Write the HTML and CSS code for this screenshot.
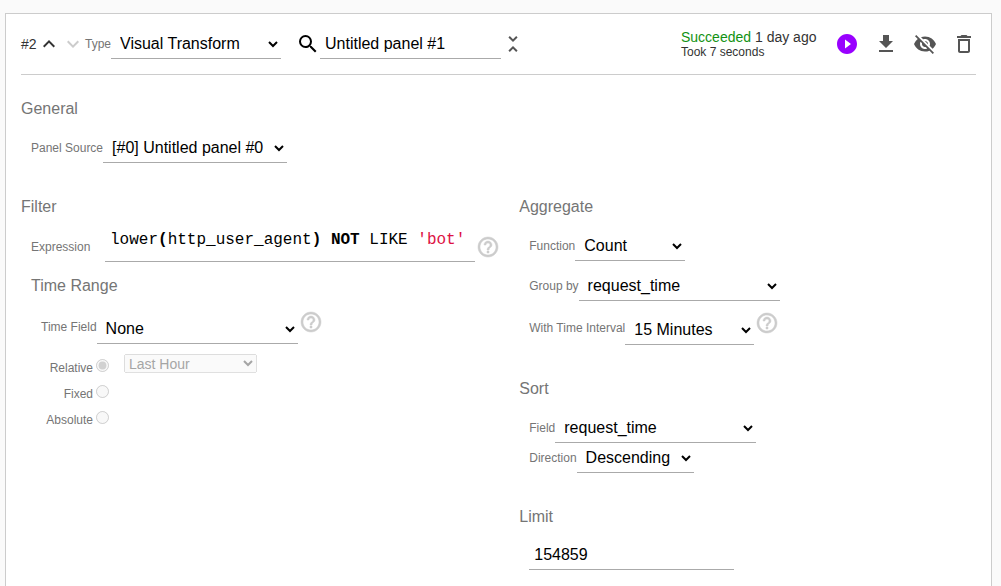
FILE: index.html
```html
<!DOCTYPE html>
<html lang="en">
<head>
<meta charset="utf-8">
<meta name="viewport" content="width=device-width, initial-scale=1">
<title>Untitled panel #1</title>
<link rel="stylesheet" href="styles.css">
</head>
<body>
<main class="panel">
  <header class="panel-header">
    <span class="panel-number">#2</span>
    <button class="icon-button move-up" type="button" aria-label="Move up"><svg class="icon" viewBox="0 0 24 24"><path d="M7.41 15.41 12 10.83l4.59 4.58L18 14l-6-6-6 6z"/></svg></button>
    <button class="icon-button move-down" type="button" aria-label="Move down" disabled><svg class="icon" viewBox="0 0 24 24"><path d="M7.41 8.59 12 13.17l4.59-4.58L18 10l-6 6-6-6z"/></svg></button>
    <label class="label" for="type">Type</label>
    <select class="select select-type" id="type"><option>Visual Transform</option></select>
    <label class="search-label" for="name" aria-label="Panel name"><svg class="icon" viewBox="0 0 24 24"><path d="M15.5 14h-.79l-.28-.27A6.471 6.471 0 0 0 16 9.5 6.5 6.5 0 1 0 9.5 16c1.61 0 3.09-.59 4.23-1.57l.27.28v.79l5 4.99L20.49 19l-4.99-5zm-6 0C7.01 14 5 11.99 5 9.5S7.01 5 9.5 5 14 7.01 14 9.5 11.99 14 9.5 14z"/></svg></label>
    <input class="text-input name-input" id="name" type="text" value="Untitled panel #1">
    <button class="icon-button" type="button" aria-label="Collapse panel"><svg class="icon" viewBox="0 0 24 24"><path d="M7.41 18.59 8.83 20 12 16.83 15.17 20l1.41-1.41L12 14l-4.59 4.59zm9.18-13.18L15.17 4 12 7.17 8.83 4 7.41 5.41 12 10l4.59-4.59z"/></svg></button>
    <div class="actions">
      <div class="status">
        <div class="status-line"><span class="success">Succeeded</span> 1 day ago</div>
        <div class="status-time">Took 7 seconds</div>
      </div>
      <button class="icon-button run" type="button" aria-label="Run"><svg class="icon" viewBox="0 0 24 24"><path d="M12 2C6.48 2 2 6.48 2 12s4.48 10 10 10 10-4.48 10-10S17.52 2 12 2zm-2 14.5v-9l6 4.5-6 4.5z"/></svg></button>
      <button class="icon-button" type="button" aria-label="Download"><svg class="icon" viewBox="0 0 24 24"><path d="M19 9h-4V3H9v6H5l7 7 7-7zM5 18v2h14v-2H5z"/></svg></button>
      <button class="icon-button" type="button" aria-label="Hide"><svg class="icon" viewBox="0 0 24 24"><path d="M12 7c2.76 0 5 2.24 5 5 0 .65-.13 1.26-.36 1.83l2.92 2.92c1.51-1.26 2.7-2.89 3.43-4.75-1.73-4.39-6-7.5-11-7.5-1.4 0-2.74.25-3.98.7l2.16 2.16C10.74 7.13 11.35 7 12 7zM2 4.27l2.28 2.28.46.46A11.804 11.804 0 0 0 1 12c1.73 4.39 6 7.5 11 7.5 1.55 0 3.03-.3 4.38-.84l.42.42L19.73 22 21 20.73 3.27 3 2 4.27zM7.53 9.8l1.55 1.55c-.05.21-.08.43-.08.65 0 1.66 1.34 3 3 3 .22 0 .44-.03.65-.08l1.55 1.55c-.67.33-1.41.53-2.2.53-2.76 0-5-2.24-5-5 0-.79.2-1.53.53-2.2zm4.31-.78 3.15 3.15.02-.16c0-1.66-1.34-3-3-3l-.17.01z"/></svg></button>
      <button class="icon-button" type="button" aria-label="Delete"><svg class="icon" viewBox="0 0 24 24"><path d="M6 19c0 1.1.9 2 2 2h8c1.1 0 2-.9 2-2V7H6v12zM8 9h8v10H8V9zm7.5-5-1-1h-5l-1 1H5v2h14V4h-3.5z"/></svg></button>
    </div>
  </header>

  <section class="section">
    <h2 class="heading">General</h2>
    <div class="fields">
      <div class="row">
        <label class="label" for="source">Panel Source</label>
        <select class="select" id="source"><option>[#0] Untitled panel #0</option></select>
      </div>
    </div>
  </section>

  <div class="columns">
    <section class="section">
      <h2 class="heading">Filter</h2>
      <div class="fields">
        <div class="row expression-row">
          <span class="label expression-label" id="expression-label">Expression</span>
          <div class="expression" role="textbox" contenteditable="true" spellcheck="false" aria-labelledby="expression-label">lower<b>(</b>http_user_agent<b>)</b> <b>NOT</b> LIKE <span class="string">'bot'</span></div>
          <button class="icon-button help" type="button" aria-label="Expression help"><svg class="icon" viewBox="0 0 24 24"><path d="M11 18h2v-2h-2v2zm1-16C6.48 2 2 6.48 2 12s4.48 10 10 10 10-4.48 10-10S17.52 2 12 2zm0 18c-4.41 0-8-3.59-8-8s3.59-8 8-8 8 3.59 8 8-3.59 8-8 8zm0-14c-2.21 0-4 1.79-4 4h2c0-1.1.9-2 2-2s2 .9 2 2c0 2-3 1.75-3 5h2c0-2.25 3-2.5 3-5 0-2.21-1.79-4-4-4z"/></svg></button>
        </div>
        <h3 class="heading subheading">Time Range</h3>
        <div class="fields">
          <div class="row help-row">
            <label class="label" for="time-field">Time Field</label>
            <select class="select select-wide" id="time-field"><option>None</option></select>
            <button class="icon-button help" type="button" aria-label="Time field help"><svg class="icon" viewBox="0 0 24 24"><path d="M11 18h2v-2h-2v2zm1-16C6.48 2 2 6.48 2 12s4.48 10 10 10 10-4.48 10-10S17.52 2 12 2zm0 18c-4.41 0-8-3.59-8-8s3.59-8 8-8 8 3.59 8 8-3.59 8-8 8zm0-14c-2.21 0-4 1.79-4 4h2c0-1.1.9-2 2-2s2 .9 2 2c0 2-3 1.75-3 5h2c0-2.25 3-2.5 3-5 0-2.21-1.79-4-4-4z"/></svg></button>
          </div>
          <div class="ranges">
            <div class="range">
              <label class="range-label" for="relative">Relative</label>
              <input class="radio" type="radio" name="range" id="relative" checked disabled>
              <select class="range-select" aria-label="Relative range" disabled><option>Last Hour</option></select>
            </div>
            <div class="range">
              <label class="range-label" for="fixed">Fixed</label>
              <input class="radio" type="radio" name="range" id="fixed" disabled>
            </div>
            <div class="range">
              <label class="range-label" for="absolute">Absolute</label>
              <input class="radio" type="radio" name="range" id="absolute" disabled>
            </div>
          </div>
        </div>
      </div>
    </section>

    <div>
      <section class="section">
        <h2 class="heading">Aggregate</h2>
        <div class="fields">
          <div class="row">
            <label class="label" for="function">Function</label>
            <select class="select select-function" id="function"><option>Count</option></select>
          </div>
          <div class="row group-row">
            <label class="label" for="group">Group by</label>
            <select class="select select-wide" id="group"><option>request_time</option></select>
          </div>
          <div class="row help-row interval-row">
            <label class="label" for="interval">With Time Interval</label>
            <select class="select select-interval" id="interval"><option>15 Minutes</option></select>
            <button class="icon-button help" type="button" aria-label="Time interval help"><svg class="icon" viewBox="0 0 24 24"><path d="M11 18h2v-2h-2v2zm1-16C6.48 2 2 6.48 2 12s4.48 10 10 10 10-4.48 10-10S17.52 2 12 2zm0 18c-4.41 0-8-3.59-8-8s3.59-8 8-8 8 3.59 8 8-3.59 8-8 8zm0-14c-2.21 0-4 1.79-4 4h2c0-1.1.9-2 2-2s2 .9 2 2c0 2-3 1.75-3 5h2c0-2.25 3-2.5 3-5 0-2.21-1.79-4-4-4z"/></svg></button>
          </div>
        </div>
      </section>
      <section class="section">
        <h2 class="heading">Sort</h2>
        <div class="fields">
          <div class="row">
            <label class="label" for="sort-field">Field</label>
            <select class="select select-wide" id="sort-field"><option>request_time</option></select>
          </div>
          <div class="row">
            <label class="label" for="direction">Direction</label>
            <select class="select" id="direction"><option>Descending</option></select>
          </div>
        </div>
      </section>
      <section class="section">
        <h2 class="heading" id="limit-heading">Limit</h2>
        <div class="fields">
          <input class="text-input limit-input" type="text" inputmode="numeric" value="154859" aria-labelledby="limit-heading">
        </div>
      </section>
    </div>
  </div>
</main>
</body>
</html>
```

FILE: styles.css
```css
* {
  box-sizing: border-box;
}

body {
  margin: 0;
  background: #fafafa;
  color: #333;
  font: 14px/20px "Liberation Sans", Arial, sans-serif;
}

.panel {
  margin: 13px 9px 0 5px;
  padding: 0 15px;
  border: 1px solid #ccc;
  background: #fff;
}

.panel-header {
  display: flex;
  align-items: center;
  height: 61px;
  margin-bottom: 23px;
  border-bottom: 1px solid #ccc;
}

.panel-number {
  width: 16px;
}

.icon {
  display: block;
  width: 24px;
  height: 24px;
  fill: currentColor;
}

.icon-button {
  flex: none;
  padding: 0;
  border: 0;
  background: none;
  color: #555;
}

.move-up {
  color: #333;
}

.move-down {
  color: #ccc;
}

.label,
.range-label {
  color: #757575;
  font-size: 12px;
  white-space: nowrap;
}

.select,
.text-input {
  height: 30px;
  border: 0;
  border-bottom: 1px solid #aaa;
  border-radius: 0;
  background-color: #fff;
  color: #000;
  font: 16px "Liberation Sans", Arial, sans-serif;
}

.select {
  padding: 0 7px 0 5px;
}

.text-input {
  padding: 0 5px;
}

.select-type {
  width: 170px;
}

.select-wide {
  width: 201px;
}

.select-function {
  width: 110px;
}

.select-interval {
  width: 129px;
}

.search-label {
  margin-left: 15px;
  color: #000;
}

.name-input {
  width: 181px;
}

.actions {
  display: flex;
  align-items: center;
  gap: 15px;
  margin-left: auto;
}

.status {
  min-width: 139px;
  white-space: nowrap;
}

.status-line {
  line-height: 17px;
}

.status-time {
  font-size: 12px;
  line-height: 12px;
  padding-bottom: 2px;
}

.success {
  color: #129212;
}

.run {
  color: #90f;
}

.section {
  margin-bottom: 32px;
}

.heading {
  margin: 0 0 14px;
  padding-top: 1px;
  color: #757575;
  font-size: 16px;
  font-weight: 400;
}

.section > .heading {
  padding-top: 1px;
}

.section + .section,
.columns {
  margin-top: 33px;
}

.subheading {
  margin-top: 13px;
}

.fields {
  padding-left: 10px;
}

.row {
  display: flex;
  align-items: center;
}

.columns {
  display: grid;
  grid-template-columns: 12fr 11fr;
}

.expression-row {
  height: 31px;
}

.expression-label {
  width: 74px;
}

.expression {
  width: 370px;
  height: 31px;
  padding: 0 5px;
  border-bottom: 1px solid #aaa;
  color: #000;
  font: 16px/18px "Liberation Mono", "Courier New", monospace;
  white-space: pre;
}

.string {
  color: #dd1144;
}

.help {
  margin-left: 1px;
  color: #ccc;
  stroke: currentColor;
  stroke-width: 0.5;
}

.help-row {
  height: 34px;
}

.help-row .select {
  align-self: flex-end;
}

.help-row .help {
  align-self: flex-start;
}

.group-row,
.interval-row {
  margin-top: 10px;
}

.ranges {
  padding-top: 10px;
}

.range {
  display: flex;
  align-items: flex-start;
  height: 26px;
}

.range-label {
  width: 52px;
  line-height: 28px;
  text-align: right;
}

.radio {
  width: 13px;
  height: 13px;
  margin: 5px 15px 0 3px;
}

.range-select {
  width: 133px;
  height: 19px;
  font: 14px "Liberation Sans", Arial, sans-serif;
}

.limit-input {
  width: 205px;
  height: 29px;
}
```
